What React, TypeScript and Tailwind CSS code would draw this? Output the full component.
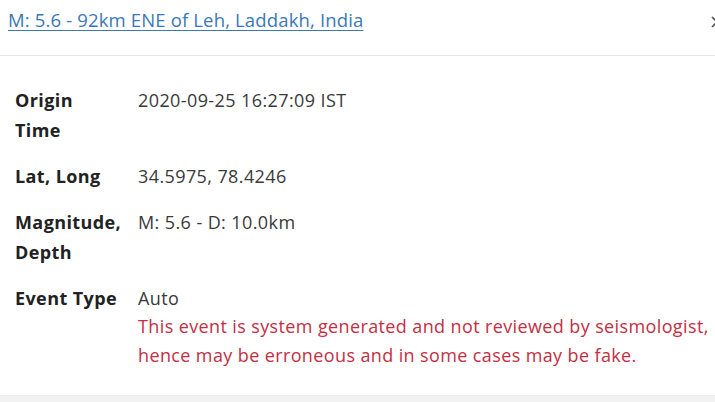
export default function App() {
    const rows = [
        { label: ["Origin", "Time"], value: "2020-09-25 16:27:09 IST" },
        { label: ["Lat, Long"], value: "34.5975, 78.4246" },
        { label: ["Magnitude,", "Depth"], value: "M: 5.6 - D: 10.0km" },
    ];

    return (
        <div className="w-[715px] h-[402px] overflow-hidden bg-white font-['Open_Sans',sans-serif]">
            {/* Header */}
            <div className="h-[56px] flex items-start justify-between border-b border-[#e6e6e6] pl-[8px]">
                <a className="mt-[6px] text-[18.5px] leading-[28px] text-[#3a78b8] underline underline-offset-[3px] decoration-[1px] tracking-[0.15px]">
                    M: 5.6 - 92km ENE of Leh, Laddakh, India
                </a>
                <svg className="mt-[16px] mr-[-8px] shrink-0" width="12" height="12" viewBox="0 0 12 12">
                    <path d="M1 1 L11 11 M11 1 L1 11" stroke="#555" strokeWidth="1.6" />
                </svg>
            </div>

            {/* Body */}
            <div className="h-[340px] border-b border-[#ececec] pl-[15px] pt-[29px]">
                <div className="grid grid-cols-[123px_1fr] gap-y-[16px] text-[18px] leading-[30px]">
                    {rows.map((r) => (
                        <div key={r.value} className="contents">
                            <div className="font-bold text-[#222] tracking-[0.4px]">
                                {r.label.map((l) => (
                                    <div key={l}>{l}</div>
                                ))}
                            </div>
                            <div className="text-[#3a3a3a] tracking-[0.4px]">{r.value}</div>
                        </div>
                    ))}
                    <div className="font-bold text-[#222] tracking-[0.4px]">Event Type</div>
                    <div className="tracking-[0.38px]">
                        <div className="text-[#3a3a3a]">Auto</div>
                        <div className="text-[#c42f43] leading-[29px] -mt-[1px] whitespace-nowrap">
                            This event is system generated and not reviewed by seismologist,
                            <br />
                            hence may be erroneous and in some cases may be fake.
                        </div>
                    </div>
                </div>
            </div>
            <div className="h-[6px] bg-[#f2f2f2]" />
        </div>
    );
}
